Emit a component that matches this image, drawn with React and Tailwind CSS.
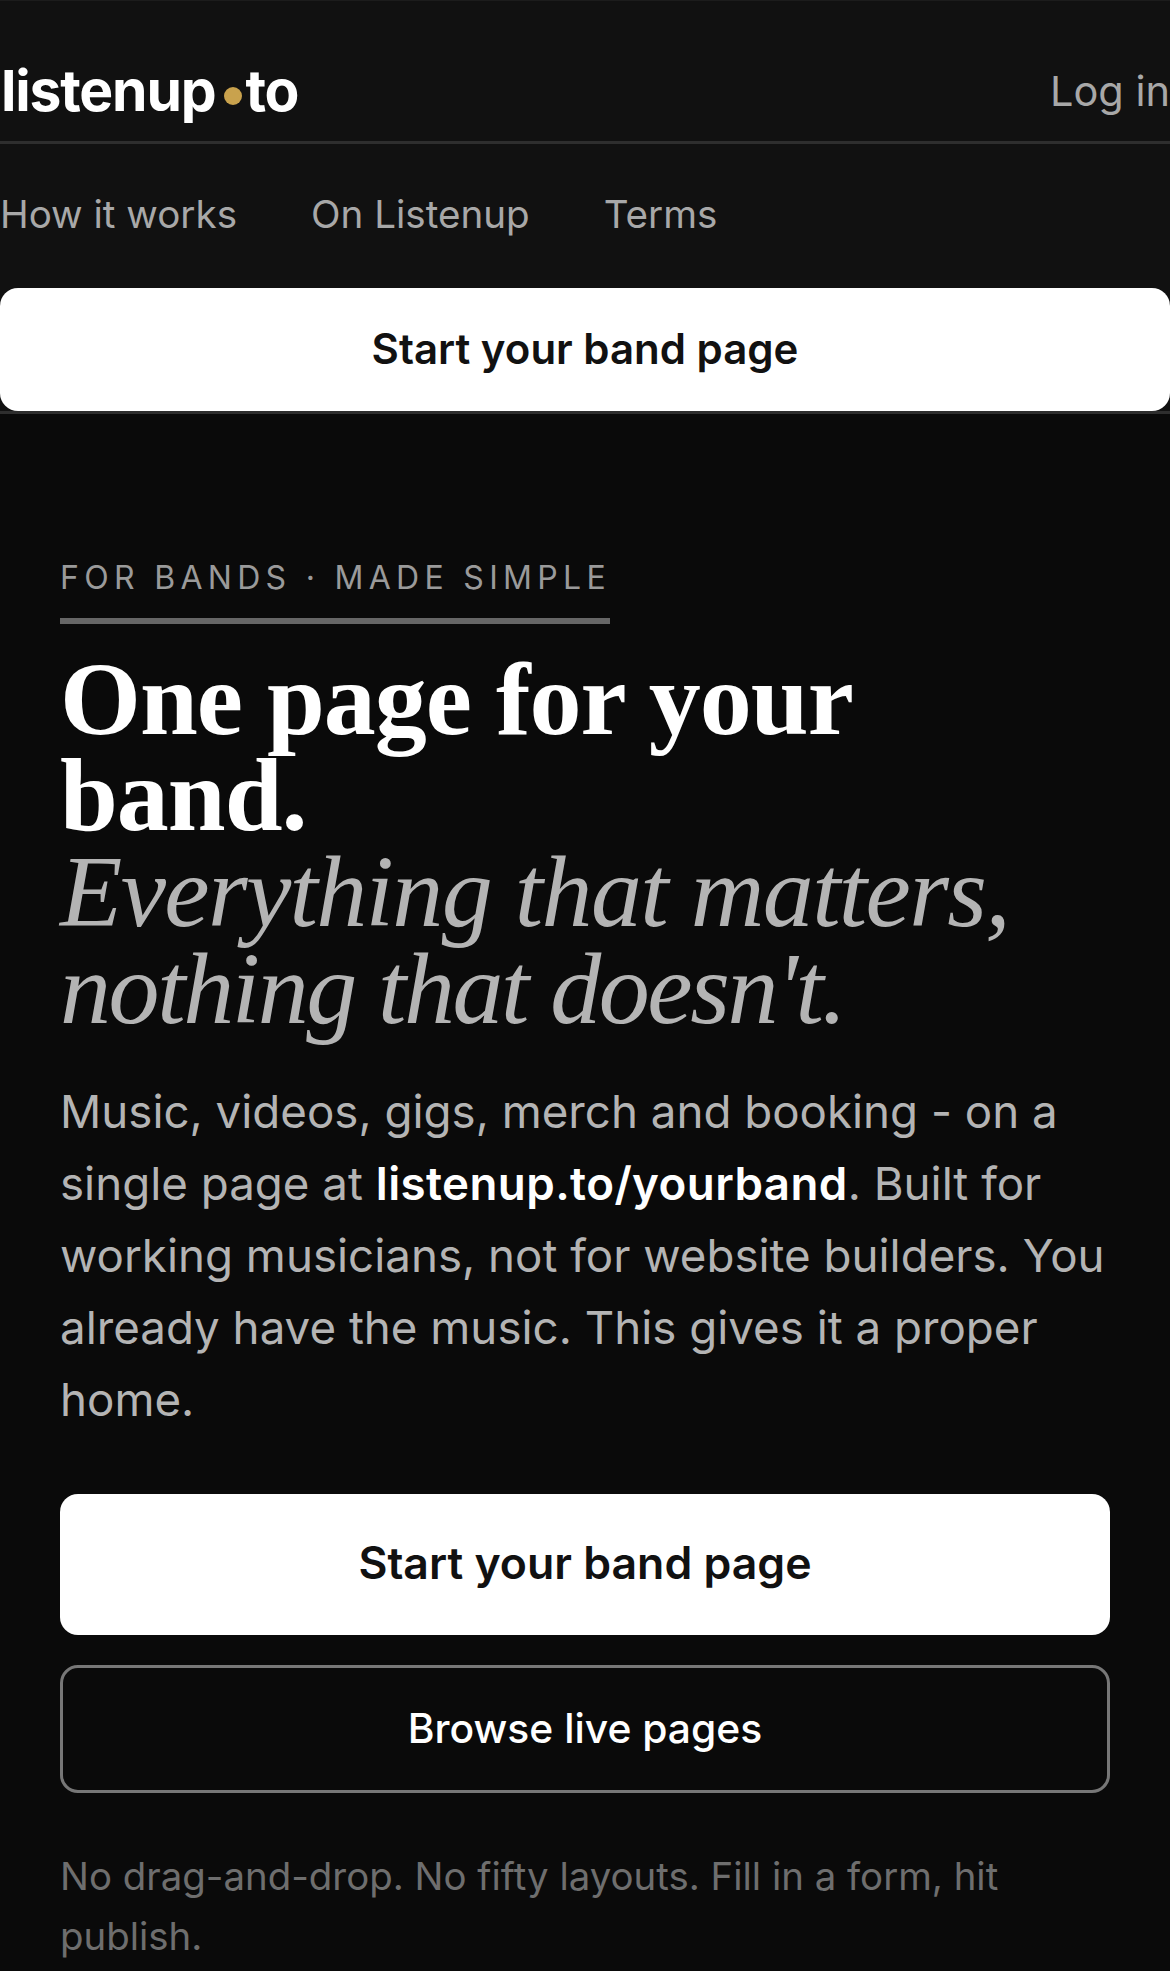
export default function App() {
  return (
    <div className="w-[1170px] h-[1971px] overflow-hidden bg-[#0a0a0a] font-['Inter',sans-serif]">
      <header className="bg-[#111111] border-t border-[#1c1c1c] border-b-[3px] border-b-[#2e2e2e]">
        <div className="h-[143px] pt-[38px] flex items-center justify-between border-b-[3px] border-[#2e2e2e]">
          <div className="flex items-center text-[57px] font-bold text-white tracking-[-1.2px] leading-none pl-[1px]">
            <span>listenup</span>
            <span className="w-[18px] h-[18px] rounded-full bg-[#c9a24d] ml-[9px] mr-[3px] mt-[12px]"></span>
            <span>to</span>
          </div>
          <span className="text-[41.5px] text-[#a8a8a8] mt-[3px]">Log in</span>
        </div>
        <nav className="h-[144px] pb-[3px] flex items-center gap-[74px] text-[38.6px] text-[#a8a8a8]">
          <span>How it works</span><span>On Listenup</span><span>Terms</span>
        </nav>
        <div className="h-[123px] pb-[3px] rounded-[18px] bg-white flex items-center justify-center text-[42px] font-semibold text-[#111]">Start your band page</div>
      </header>
      <main className="px-[60px] pt-[148px]">
        <div className="w-[550px] border-b-[6px] border-[#666666] pb-[24px] text-[32px] tracking-[5.3px] text-[#9a9a9a] leading-none whitespace-nowrap">FOR BANDS · MADE SIMPLE</div>
        <h1 className="mt-[27px] font-['Liberation_Serif',serif] text-[104px] tracking-[-1px] leading-[96px] font-bold text-white">One page for your<br/>band.<br/><em className="font-normal text-[102px] tracking-[-1.65px] text-[#b4b4b4]">Everything that matters,</em><br/><em className="font-normal text-[102px] tracking-[-2.4px] text-[#b4b4b4]">nothing that doesn't.</em></h1>
        <p className="mt-[39px] text-[45.7px] leading-[72px] text-[#b4b4b4]">Music, videos, gigs, merch and booking - on a single page at <strong className="font-semibold text-white tracking-[0.4px]">listenup.to/yourband</strong>. Built for working musicians, not for website builders. You already have the music. This gives it a proper home.</p>
        <div className="mt-[58px] h-[141px] pb-[3px] rounded-[18px] bg-white flex items-center justify-center text-[44.6px] font-semibold text-[#111]">Start your band page</div>
        <div className="mt-[30px] h-[128px] rounded-[18px] border-[3px] border-[#777777] flex items-center justify-center text-[40.8px] font-medium text-white">Browse live pages</div>
        <p className="mt-[53px] text-[38.4px] leading-[60px] text-[#6e6e6e]">No drag-and-drop. No fifty layouts. Fill in a form, hit publish.</p>
      </main>
    </div>
  );
}
